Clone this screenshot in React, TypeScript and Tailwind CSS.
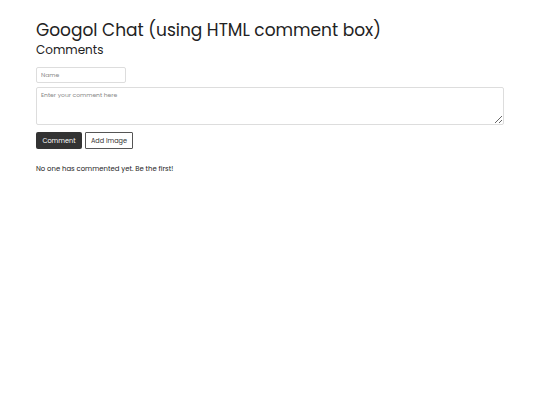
export default function App() {
  return (
    <div
      className="min-h-[405px] bg-white px-9 pt-[18px] text-[#222]"
      style={{ fontFamily: 'Poppins, Inter, "Open Sans", sans-serif' }}
    >
      <h1 className="text-[17px] leading-[24px] font-normal">Googol Chat (using HTML comment box)</h1>
      <h2 className="text-[12px] leading-[16px] font-normal">Comments</h2>
      <div className="mt-[9px] flex flex-col gap-[4px]">
        <input
          placeholder="Name"
          className="w-[90px] h-[16px] border border-[#ddd] rounded-[2px] px-[4px] text-[6px] placeholder:text-[#888] outline-none"
        />
        <textarea
          placeholder="Enter your comment here"
          className="w-[468px] h-[38px] border border-[#ddd] rounded-[2px] px-[4px] py-[3px] text-[6px] placeholder:text-[#888] outline-none"
        />
      </div>
      <div className="mt-[7px] flex gap-[3px]">
        <button className="h-[17px] w-[46px] bg-[#333] text-white text-[6.5px] font-normal rounded-[2px]">Comment</button>
        <button className="h-[17px] w-[48px] bg-white border border-[#555] text-[#333] text-[6.5px] font-normal rounded-[1px]">Add Image</button>
      </div>
      <p className="mt-[15px] text-[6.9px] text-[#222]">No one has commented yet. Be the first!</p>
    </div>
  );
}
